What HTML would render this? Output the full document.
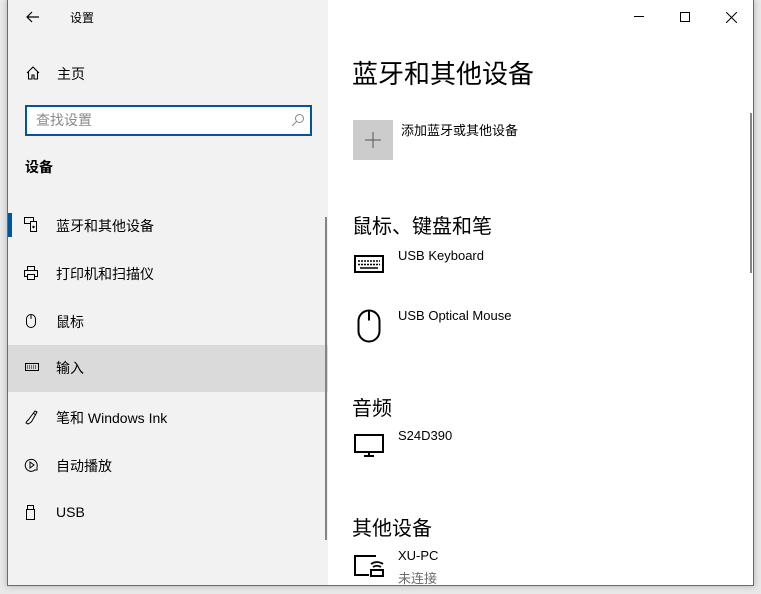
<!DOCTYPE html>
<html><head><meta charset="utf-8"><style>
*{margin:0;padding:0;box-sizing:border-box}
body{width:761px;height:594px;background:#e8e8e8;position:relative;overflow:hidden;font-family:"Liberation Sans","Noto Sans CJK SC",sans-serif;color:#000}
.win{position:absolute;left:7px;top:0;width:747px;height:586px;border:1px solid #6b6b6b;border-top:none;background:#fff;box-shadow:0 0 6px rgba(0,0,0,.25)}
.side{position:absolute;left:0;top:0;width:320px;height:585px;background:#f2f2f2}
.t{position:absolute;white-space:nowrap}
.nav{position:absolute;left:0;width:320px;height:46px}
.nav .t{left:48px;top:13px;font-size:14px}
.nav svg{position:absolute;left:16px;top:14px}
</style></head><body>
<div class="win">
<div class="side">
 <svg style="position:absolute;left:18px;top:11px" width="14" height="12" viewBox="0 0 14 12"><path d="M13 6H1M6 1L1 6l5 5" fill="none" stroke="#000" stroke-width="1.2"/></svg>
 <div class="t" style="left:62px;top:9px;font-size:12px">设置</div>
 <svg style="position:absolute;left:18px;top:66px" width="14" height="14" viewBox="0 0 14 14"><path d="M1 7L7 1l6 6M2.5 5.5V13h3.5V9h2v4h3.5V5.5" fill="none" stroke="#000" stroke-width="1.1"/></svg>
 <div class="t" style="left:49px;top:64px;font-size:14px">主页</div>
 <div style="position:absolute;left:17px;top:105px;width:287px;height:31px;border:2px solid #00569c;background:#fff"></div>
 <div class="t" style="left:28px;top:110px;font-size:14px;color:#8a8a8a">查找设置</div>
 <svg style="position:absolute;left:283px;top:113px" width="14" height="14" viewBox="0 0 14 14"><circle cx="8.5" cy="5.5" r="4" fill="none" stroke="#888" stroke-width="1"/><path d="M5.5 8.5L1 13" stroke="#888" stroke-width="1"/></svg>
 <div class="t" style="left:17px;top:157px;font-size:14px;font-weight:bold">设备</div>
 <div style="position:absolute;left:0;top:213px;width:4px;height:24px;background:#00569c"></div>
 <div class="nav" style="top:203px">
  <svg width="14" height="16" viewBox="0 0 14 16"><rect x="0.5" y="0.5" width="9" height="6" fill="none" stroke="#000"/><rect x="6.5" y="4.5" width="6" height="10" fill="#f2f2f2" stroke="#000"/><circle cx="9.5" cy="10" r="1.2"/></svg>
  <div class="t">蓝牙和其他设备</div></div>
 <div class="nav" style="top:251px">
  <svg width="14" height="16" viewBox="0 0 14 16"><rect x="3.5" y="1.5" width="7" height="4" fill="none" stroke="#000"/><rect x="0.5" y="5.5" width="13" height="6" fill="none" stroke="#000"/><rect x="3.5" y="9.5" width="7" height="5" fill="#f2f2f2" stroke="#000"/></svg>
  <div class="t">打印机和扫描仪</div></div>
 <div class="nav" style="top:299px">
  <svg width="14" height="16" viewBox="0 0 14 16"><rect x="2.5" y="1.5" width="9" height="13" rx="4.5" fill="none" stroke="#000"/><path d="M7 1.5V6" stroke="#000"/></svg>
  <div class="t">鼠标</div></div>
 <div class="nav" style="top:345px;height:47px;background:#dadada">
  <svg width="16" height="16" viewBox="0 0 16 16"><rect x="1.5" y="4.5" width="13" height="7" fill="none" stroke="#000"/><path d="M3 7h10M3 9h10" stroke="#000" stroke-dasharray="1 1"/></svg>
  <div class="t">输入</div></div>
 <div class="nav" style="top:395px">
  <svg width="16" height="16" viewBox="0 0 16 16"><path d="M2 14c0-2 2-2 3-4l6-8 2 1-5 9c-1 2-3 2-4 3z M9 4l3 2" fill="none" stroke="#000" stroke-width="1"/></svg>
  <div class="t">笔和 Windows Ink</div></div>
 <div class="nav" style="top:443px">
  <svg width="16" height="16" viewBox="0 0 16 16"><path d="M11 13A6 6 0 1 1 13 10" fill="none" stroke="#000"/><path d="M6 5v6l4-3z" fill="none" stroke="#000"/><path d="M10 13h3v-3" fill="none" stroke="#000"/></svg>
  <div class="t">自动播放</div></div>
 <div class="nav" style="top:491px">
  <svg width="14" height="16" viewBox="0 0 14 16"><rect x="3.5" y="0.5" width="6" height="4" fill="none" stroke="#000"/><rect x="2.5" y="4.5" width="8" height="10" fill="none" stroke="#000"/></svg>
  <div class="t">USB</div></div>
 <div style="position:absolute;left:317px;top:217px;width:2px;height:323px;background:#858585"></div>
</div>
<div style="position:absolute;left:626px;top:16px;width:10px;height:1px;background:#000"></div>
<div style="position:absolute;left:672px;top:12px;width:10px;height:10px;border:1px solid #000"></div>
<svg style="position:absolute;left:718px;top:12px" width="11" height="11" viewBox="0 0 11 11"><path d="M0 0L11 11M11 0L0 11" stroke="#000" stroke-width="1"/></svg>
<div style="position:absolute;left:742px;top:113px;width:2px;height:160px;background:#858585"></div>
<div class="t" style="left:344px;top:54px;font-size:26px">蓝牙和其他设备</div>
<div style="position:absolute;left:345px;top:120px;width:40px;height:40px;background:#cccccc"></div>
<svg style="position:absolute;left:357px;top:132px" width="16" height="16" viewBox="0 0 16 16"><path d="M8 0v16M0 8h16" stroke="#555" stroke-width="1"/></svg>
<div class="t" style="left:393px;top:120px;font-size:13px">添加蓝牙或其他设备</div>
<div class="t" style="left:344px;top:210px;font-size:20px">鼠标、键盘和笔</div>
<svg style="position:absolute;left:346px;top:255px" width="30" height="20" viewBox="0 0 30 20"><rect x="1" y="1" width="28" height="16" fill="none" stroke="#000" stroke-width="2"/><path d="M4 6h22M4 9.5h22" stroke="#000" stroke-width="1.5" stroke-dasharray="2 1"/><path d="M6 13h18" stroke="#000" stroke-width="1.5"/></svg>
<div class="t" style="left:390px;top:248px;font-size:13px">USB Keyboard</div>
<svg style="position:absolute;left:349px;top:309px" width="24" height="34" viewBox="0 0 24 34"><rect x="1.5" y="1.5" width="21" height="31" rx="10.5" fill="none" stroke="#000" stroke-width="2"/><path d="M12 1.5v10" stroke="#000" stroke-width="2"/></svg>
<div class="t" style="left:390px;top:308px;font-size:13px">USB Optical Mouse</div>
<div class="t" style="left:344px;top:392px;font-size:20px">音频</div>
<svg style="position:absolute;left:346px;top:434px" width="30" height="24" viewBox="0 0 30 24"><rect x="1" y="1" width="28" height="17" fill="none" stroke="#000" stroke-width="2"/><path d="M15 18v3M10 22h10" stroke="#000" stroke-width="2"/></svg>
<div class="t" style="left:390px;top:428px;font-size:13px">S24D390</div>
<div class="t" style="left:344px;top:512px;font-size:20px">其他设备</div>
<svg style="position:absolute;left:346px;top:554px" width="32" height="26" viewBox="0 0 32 26"><path d="M22 2H1v19h14" fill="none" stroke="#000" stroke-width="2"/><rect x="17" y="16" width="12" height="6" fill="none" stroke="#000" stroke-width="2"/><path d="M17 10q6-4 12 0M19 13q4-2.5 8 0" fill="none" stroke="#000" stroke-width="1.8"/></svg>
<div class="t" style="left:390px;top:548px;font-size:13px">XU-PC</div>
<div class="t" style="left:390px;top:568px;font-size:13px;color:#6d6d6d">未连接</div>
</div>
</body></html>
